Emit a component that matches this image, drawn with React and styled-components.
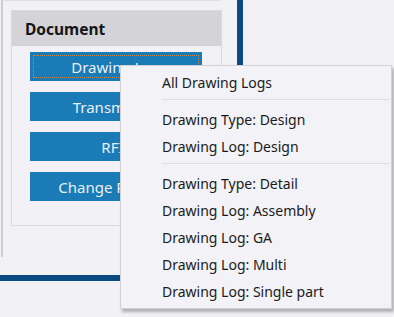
import React from "react";
import styled, { createGlobalStyle } from "styled-components";

const Global = createGlobalStyle`
  html, body { margin: 0; padding: 0; background: #f1f1f6; }
  body { font-family: "Noto Sans", "Open Sans", sans-serif; overflow: hidden; }
`;

const Stage = styled.div`
  position: relative;
  width: 394px;
  height: 317px;
  background: #f1f1f6;
`;

const Frame = styled.div`
  width: 237px;
  height: 275px;
  border-right: 6px solid #0b4a80;
  border-bottom: 6px solid #0b4a80;
  display: flex;
  flex-direction: column;
`;

const Box = styled.div`
  margin-left: 1px;
  width: 219px;
  height: 257px;
  border-left: 2px solid #cdcdd2;
  border-top: 1px solid #dedee3;
  padding: 9px 0 0 8px;
  box-sizing: border-box;
`;

const Panel = styled.div`
  width: 211px;
  height: 216px;
  box-sizing: border-box;
  border: 1px solid #dadade;
  display: flex;
  flex-direction: column;
`;

const Header = styled.div`
  height: 35px;
  background: #d3d3d8;
  display: flex;
  align-items: center;
  padding-left: 13px;
  font-weight: 700;
  font-size: 15.5px;
  color: #151515;
`;

const Buttons = styled.div`
  display: flex;
  flex-direction: column;
  gap: 11px;
  padding: 6px 0 0 18px;
`;

const Btn = styled.div`
  position: relative;
  width: 172px;
  height: 29px;
  background: #1b7bb6;
  color: #e8f0f7;
  font-size: 15px;
  display: flex;
  align-items: center;
  justify-content: center;
  box-sizing: border-box;
  padding-left: ${(p) => p.$shift || 0}px;
  outline: ${(p) => (p.$focused ? "1px dotted #d08a48" : "none")};
  outline-offset: -4px;
`;

const Menu = styled.div`
  position: absolute;
  left: 120px;
  top: 65px;
  width: 272px;
  box-sizing: border-box;
  background: #f2f2f7;
  border: 1px solid #d2d2d6;
  box-shadow: 2px 3px 3px rgba(0, 0, 0, 0.28);
  padding: 3px 0;
  display: flex;
  flex-direction: column;
`;

const Item = styled.div`
  height: 27px;
  display: flex;
  align-items: center;
  padding-left: 41px;
  font-size: 14px;
  color: #1b1b1b;
  white-space: nowrap;
`;

const Sep = styled.div`
  height: 10px;
  display: flex;
  flex-direction: column;
  padding-top: 3px;
  box-sizing: border-box;
  &::after {
    content: "";
    display: block;
    height: 1px;
    margin: 0 1px 0 41px;
    background: #dcdce1;
  }
`;

const groups = [
  ["All Drawing Logs"],
  ["Drawing Type: Design", "Drawing Log: Design"],
  [
    "Drawing Type: Detail",
    "Drawing Log: Assembly",
    "Drawing Log: GA",
    "Drawing Log: Multi",
    "Drawing Log: Single part",
  ],
];

export default function App() {
  return (
    <Stage>
      <Global />
      <Frame>
        <Box>
          <Panel>
            <Header>Document</Header>
            <Buttons>
              <Btn $focused>Drawing Log</Btn>
              <Btn>Transmittals</Btn>
              <Btn>RFIs</Btn>
              <Btn>Change Request</Btn>
            </Buttons>
          </Panel>
        </Box>
      </Frame>
      <Menu>
        {groups.map((g, gi) => (
          <React.Fragment key={gi}>
            {gi > 0 && <Sep />}
            {g.map((t) => (
              <Item key={t}>{t}</Item>
            ))}
          </React.Fragment>
        ))}
      </Menu>
    </Stage>
  );
}
